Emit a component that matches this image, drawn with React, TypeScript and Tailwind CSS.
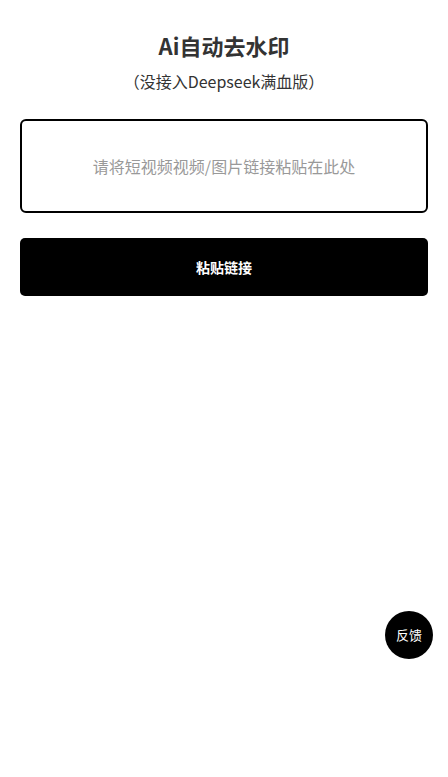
import React, { useState } from 'react';

export default function App() {
  const [link, setLink] = useState('');

  return (
    <div
      className="relative min-h-[777px] w-full bg-white"
      style={{ fontFamily: '"Noto Sans CJK SC", "Noto Sans", sans-serif' }}
    >
      <div className="px-5 pt-[29px]">
        <h1 className="text-center text-[22px] font-bold leading-8 text-[#333]">Ai自动去水印</h1>
        <p className="mt-[8px] text-center text-[16px] leading-6 text-[#333]">（没接入Deepseek满血版）</p>

        <div className="mt-[26px] flex h-[94px] items-center rounded-md border-2 border-black">
          <input
            value={link}
            onChange={(e) => setLink(e.target.value)}
            placeholder="请将短视频视频/图片链接粘贴在此处"
            className="w-full bg-transparent px-3 text-center text-[16px] text-[#333] outline-none placeholder:text-[#999]"
          />
        </div>

        <button className="mt-[25px] flex h-[58px] w-full items-center justify-center rounded-[5px] bg-black text-[14px] font-bold text-white">
          粘贴链接
        </button>
      </div>

      <button className="absolute left-[385px] top-[611px] flex h-12 w-12 items-center justify-center rounded-full bg-black text-[13px] text-white">
        反馈
      </button>
    </div>
  );
}
